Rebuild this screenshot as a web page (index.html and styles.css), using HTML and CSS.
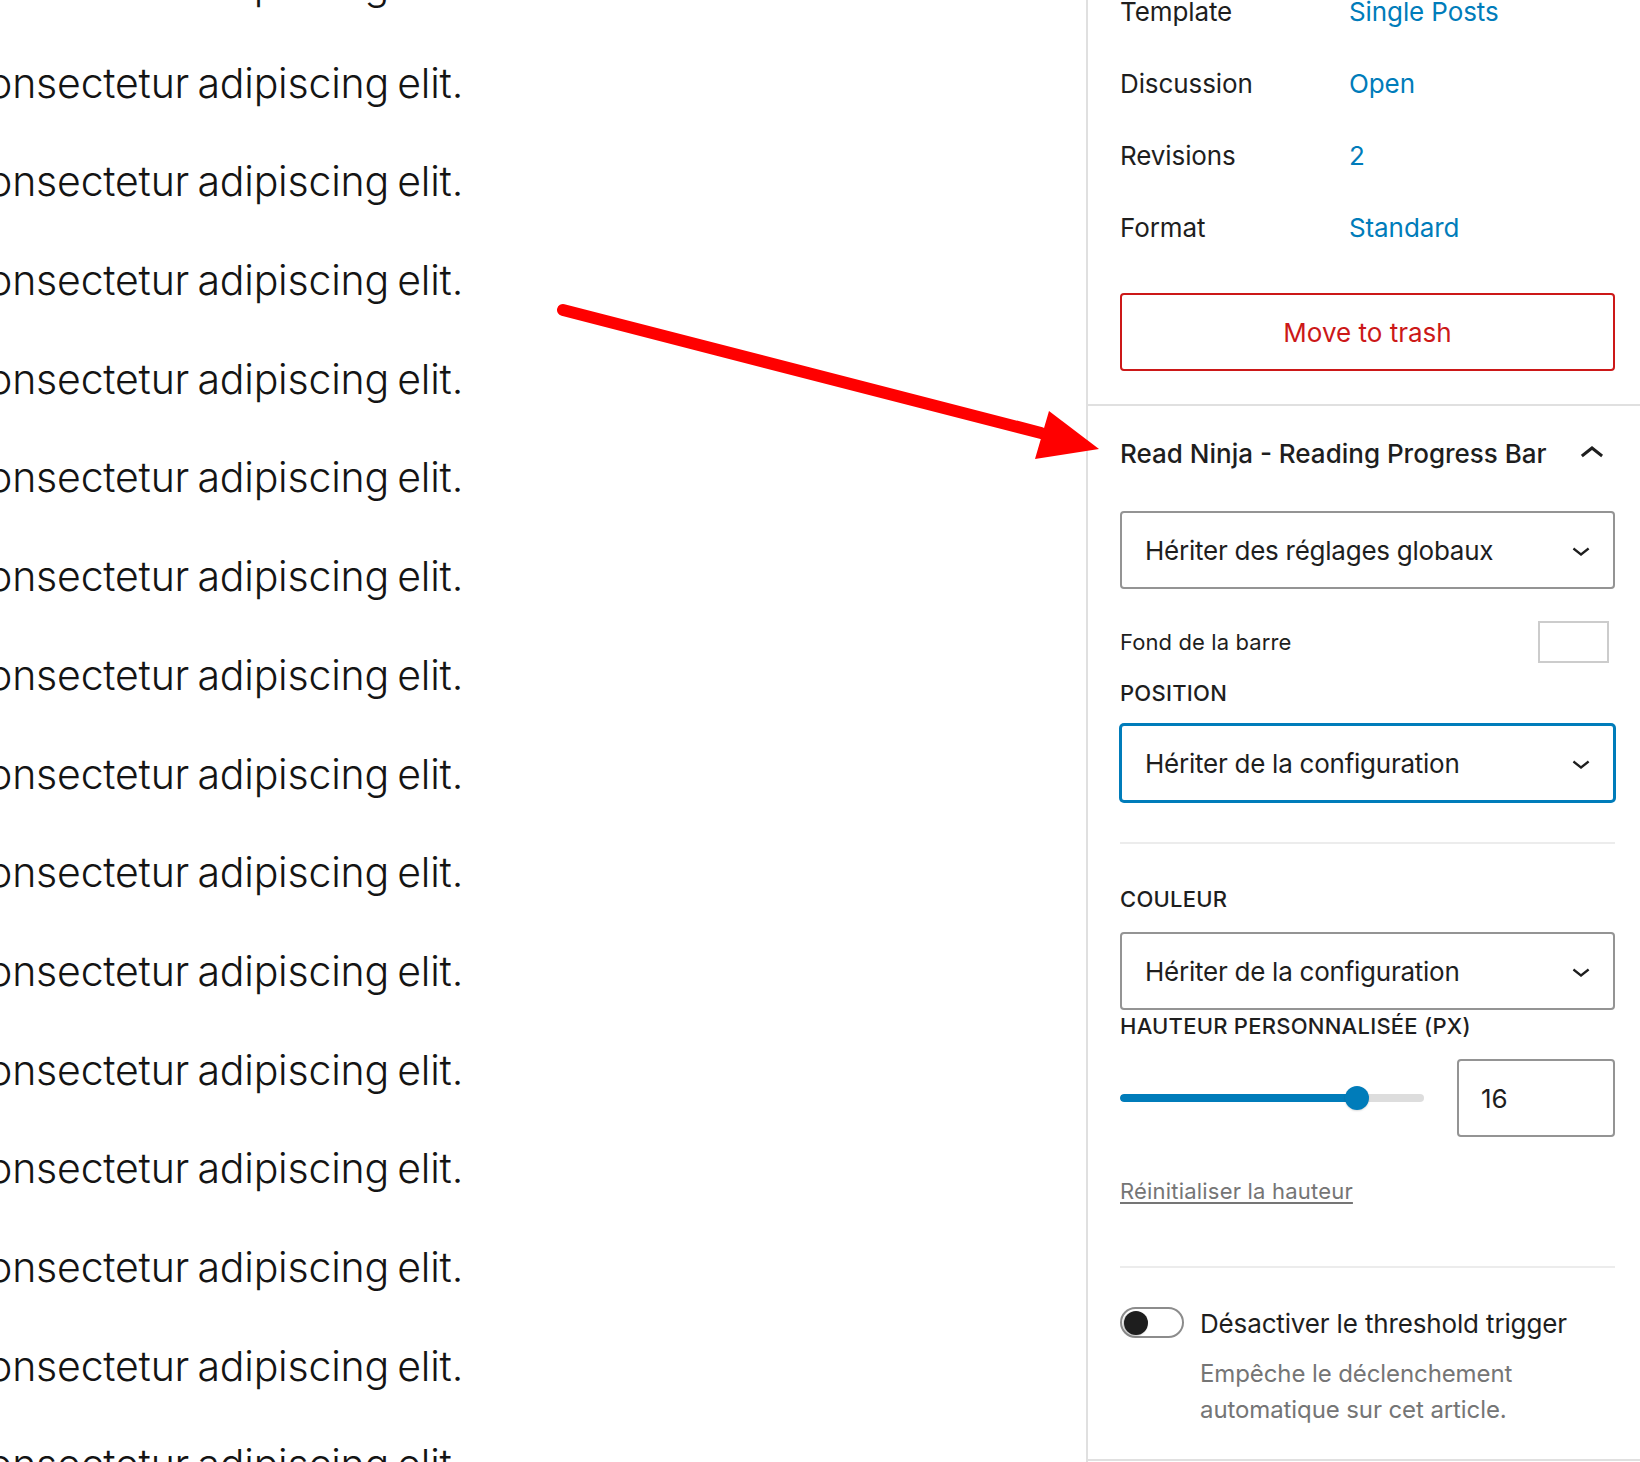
FILE: index.html
```html
<!DOCTYPE html>
<html lang="fr">
<head>
<meta charset="utf-8">
<title>Read Ninja – Reading Progress Bar</title>
<link rel="stylesheet" href="styles.css">
</head>
<body>
<div class="page">
  <main class="canvas">
    <div class="lines">
      <p class="line"><span>Lorem ipsum dolor sit amet, consectetur adipiscing elit.</span></p>
      <p class="line"><span>Lorem ipsum dolor sit amet, consectetur adipiscing elit.</span></p>
      <p class="line"><span>Lorem ipsum dolor sit amet, consectetur adipiscing elit.</span></p>
      <p class="line"><span>Lorem ipsum dolor sit amet, consectetur adipiscing elit.</span></p>
      <p class="line"><span>Lorem ipsum dolor sit amet, consectetur adipiscing elit.</span></p>
      <p class="line"><span>Lorem ipsum dolor sit amet, consectetur adipiscing elit.</span></p>
      <p class="line"><span>Lorem ipsum dolor sit amet, consectetur adipiscing elit.</span></p>
      <p class="line"><span>Lorem ipsum dolor sit amet, consectetur adipiscing elit.</span></p>
      <p class="line"><span>Lorem ipsum dolor sit amet, consectetur adipiscing elit.</span></p>
      <p class="line"><span>Lorem ipsum dolor sit amet, consectetur adipiscing elit.</span></p>
      <p class="line"><span>Lorem ipsum dolor sit amet, consectetur adipiscing elit.</span></p>
      <p class="line"><span>Lorem ipsum dolor sit amet, consectetur adipiscing elit.</span></p>
      <p class="line"><span>Lorem ipsum dolor sit amet, consectetur adipiscing elit.</span></p>
      <p class="line"><span>Lorem ipsum dolor sit amet, consectetur adipiscing elit.</span></p>
      <p class="line"><span>Lorem ipsum dolor sit amet, consectetur adipiscing elit.</span></p>
      <p class="line"><span>Lorem ipsum dolor sit amet, consectetur adipiscing elit.</span></p>
    </div>
  </main>

  <aside class="sidebar">
    <section class="panel summary">
      <div class="rows">
        <div class="row"><span class="row-label">Template</span><span class="row-value">Single Posts</span></div>
        <div class="row"><span class="row-label">Discussion</span><span class="row-value">Open</span></div>
        <div class="row"><span class="row-label">Revisions</span><span class="row-value">2</span></div>
        <div class="row"><span class="row-label">Format</span><span class="row-value">Standard</span></div>
      </div>
      <div class="trash">Move to trash</div>
    </section>

    <section class="panel plugin">
      <header class="panel-header">
        <h2 class="panel-title">Read Ninja - Reading Progress Bar</h2>
        <svg class="icon-up" viewBox="0 0 24 24" width="48" height="48" aria-hidden="true"><path d="M6.5 12.4L12 8l5.5 4.4-.9 1.2L12 10l-4.6 3.6-1-1.2z"/></svg>
      </header>
      <div class="panel-body">
        <div class="select select-first">
          <span>Hériter des réglages globaux</span>
          <svg class="icon-down" viewBox="0 0 24 24" width="36" height="36" aria-hidden="true"><path d="M17.5 11.6L12 16l-5.5-4.4.9-1.2L12 14l4.6-3.6 1 1.2z"/></svg>
        </div>

        <div class="color-row">
          <span class="color-label">Fond de la barre</span>
          <span class="swatch"></span>
        </div>

        <div class="field-label label-position">Position</div>
        <div class="select is-focused">
          <span>Hériter de la configuration</span>
          <svg class="icon-down" viewBox="0 0 24 24" width="36" height="36" aria-hidden="true"><path d="M17.5 11.6L12 16l-5.5-4.4.9-1.2L12 14l4.6-3.6 1 1.2z"/></svg>
        </div>

        <div class="sep sep-1"></div>

        <div class="field-label label-couleur">Couleur</div>
        <div class="select select-couleur">
          <span>Hériter de la configuration</span>
          <svg class="icon-down" viewBox="0 0 24 24" width="36" height="36" aria-hidden="true"><path d="M17.5 11.6L12 16l-5.5-4.4.9-1.2L12 14l4.6-3.6 1 1.2z"/></svg>
        </div>
        <div class="field-label label-hauteur">Hauteur personnalisée (px)</div>

        <div class="range-row">
          <div class="range">
            <div class="track"><div class="fill" style="width: 237px"></div></div>
            <span class="thumb" style="left: 225px"></span>
          </div>
          <div class="number">16</div>
        </div>

        <a class="reset">Réinitialiser la hauteur</a>

        <div class="sep sep-2"></div>

        <div class="toggle-row">
          <span class="toggle"><span class="knob"></span></span>
          <span class="toggle-label">Désactiver le threshold trigger</span>
        </div>
        <p class="help">Empêche le déclenchement automatique sur cet article.</p>
      </div>
    </section>
  </aside>

  <svg class="arrow" width="1640" height="1462" viewBox="0 0 1640 1462" aria-hidden="true">
    <line x1="563" y1="310" x2="1041" y2="433" stroke="#ff0000" stroke-width="12" stroke-linecap="round"/>
    <polygon points="1049,411 1099,449 1035,459" fill="#ff0000"/>
  </svg>
</div>
</body>
</html>
```

FILE: styles.css
```css
* { box-sizing: border-box; }

html, body {
  margin: 0;
  padding: 0;
  background: #ffffff;
}

body {
  width: 1640px;
  height: 1462px;
  overflow: hidden;
}

.page {
  position: relative;
  display: flex;
  width: 1640px;
  height: 1462px;
  overflow: hidden;
}

/* ---------- Editor canvas (left) ---------- */
.canvas {
  flex: 0 0 1086px;
  overflow: hidden;
}

.lines {
  margin-top: -65px;
}

.line {
  margin: 0;
  width: 463px;
  height: 98.7px;
  display: flex;
  justify-content: flex-end;
  overflow: hidden;
  font-family: Inter, "Noto Sans", sans-serif;
  font-size: 41px;
  font-weight: 300;
  line-height: 98.7px;
  letter-spacing: -0.2px;
  word-spacing: -3px;
  color: #141414;
  white-space: nowrap;
}

.line span { flex: none; }

/* ---------- Sidebar ---------- */
.sidebar {
  flex: 0 0 561px;
  border-left: 2px solid #e0e0e0;
  font-family: Inter, "Noto Sans", sans-serif;
  color: #1e1e1e;
  font-size: 26px;
}

.panel {
  border-bottom: 2px solid #e0e0e0;
}

.summary {
  padding: 0 32px 33px;
}

.rows {
  margin-top: -24px;
}

.row {
  display: flex;
  align-items: center;
  height: 72px;
  line-height: 72px;
  letter-spacing: -0.1px;
}

.row-label {
  width: 229px;
  flex: none;
}

.row-value {
  color: #007cba;
}

.trash {
  margin-top: 29px;
  height: 78px;
  border: 2px solid #cc1818;
  border-radius: 4px;
  color: #cc1818;
  display: flex;
  align-items: center;
  justify-content: center;
  line-height: 1;
  padding-top: 2px;
}

/* plugin panel */
.panel-header {
  height: 96px;
  padding: 0 32px;
  display: flex;
  align-items: center;
  justify-content: space-between;
}

.panel-title {
  margin: 0;
  font-size: 26px;
  font-weight: 500;
  line-height: 1.2;
}

.icon-up {
  display: block;
  fill: #1e1e1e;
  flex: none;
  margin-right: -1px;
}

.panel-body {
  padding: 0 32px 31px;
}

.select {
  margin-top: 15px;
  height: 78px;
  border: 2px solid #949494;
  border-radius: 4px;
  padding: 0 14px 0 23px;
  display: flex;
  align-items: center;
  justify-content: space-between;
  line-height: 1;
  letter-spacing: -0.25px;
  background: #fff;
}

.select > span { padding-top: 2px; }

.select-first { margin-top: 9px; }
.select-couleur { margin-top: 17px; }

.select.is-focused {
  border-color: #007cba;
  box-shadow: 0 0 0 1px #007cba;
}

.icon-down {
  display: block;
  fill: #1e1e1e;
  flex: none;
}

.color-row {
  margin-top: 32px;
  height: 42px;
  display: flex;
  align-items: center;
  justify-content: space-between;
}

.color-label {
  font-size: 22px;
  letter-spacing: 0.1px;
}

.swatch {
  width: 71px;
  height: 42px;
  margin-right: 6px;
  border: 2px solid #cccccc;
  background: #fff;
}

.field-label {
  font-size: 22px;
  font-weight: 500;
  line-height: 32px;
  letter-spacing: 0.25px;
  text-transform: uppercase;
}

.label-position { margin-top: 14px; }
.label-couleur { margin-top: 39px; }
.label-hauteur { margin-top: 0; }

.sep {
  height: 2px;
  background: #ececec;
}

.sep-1 { margin-top: 40px; }
.sep-2 { margin-top: 59px; }

.range-row {
  margin-top: 17px;
  height: 78px;
  display: flex;
  align-items: center;
  justify-content: space-between;
}

.range {
  position: relative;
  width: 304px;
  height: 24px;
  display: flex;
  align-items: center;
}

.track {
  width: 100%;
  height: 8px;
  border-radius: 4px;
  background: #dddddd;
  overflow: hidden;
}

.fill {
  height: 100%;
  background: #007cba;
  border-radius: 4px;
}

.thumb {
  position: absolute;
  top: 0;
  width: 24px;
  height: 24px;
  border-radius: 50%;
  background: #007cba;
  box-shadow: 0 1px 2px rgba(0, 0, 0, 0.15);
}

.number {
  width: 158px;
  height: 78px;
  border: 2px solid #949494;
  border-radius: 4px;
  padding-left: 22px;
  padding-top: 2px;
  display: flex;
  align-items: center;
  line-height: 1;
}

.reset {
  display: block;
  margin-top: 38px;
  font-size: 22px;
  line-height: 32px;
  letter-spacing: 0.2px;
  color: #757575;
  text-decoration: underline;
  text-underline-offset: 3px;
  text-decoration-thickness: 1.5px;
  width: max-content;
}

.toggle-row {
  margin-top: 39px;
  height: 31px;
  display: flex;
  align-items: center;
  gap: 16px;
}

.toggle {
  flex: none;
  width: 64px;
  height: 31px;
  border: 2px solid #8c8c8c;
  border-radius: 16px;
  display: flex;
  align-items: center;
  padding-left: 2px;
  background: #fff;
}

.knob {
  width: 24px;
  height: 24px;
  border-radius: 50%;
  background: #1e1e1e;
  box-shadow: -1px 1px 2px rgba(0, 0, 0, 0.25);
}

.toggle-label {
  font-size: 26px;
  line-height: 1;
  letter-spacing: -0.15px;
  padding-top: 2px;
}

.help {
  margin: 18px 0 0 80px;
  font-size: 24px;
  line-height: 36px;
  letter-spacing: -0.1px;
  color: #757575;
}

/* annotation arrow overlay */
.arrow {
  position: absolute;
  left: 0;
  top: 0;
  pointer-events: none;
}
```
